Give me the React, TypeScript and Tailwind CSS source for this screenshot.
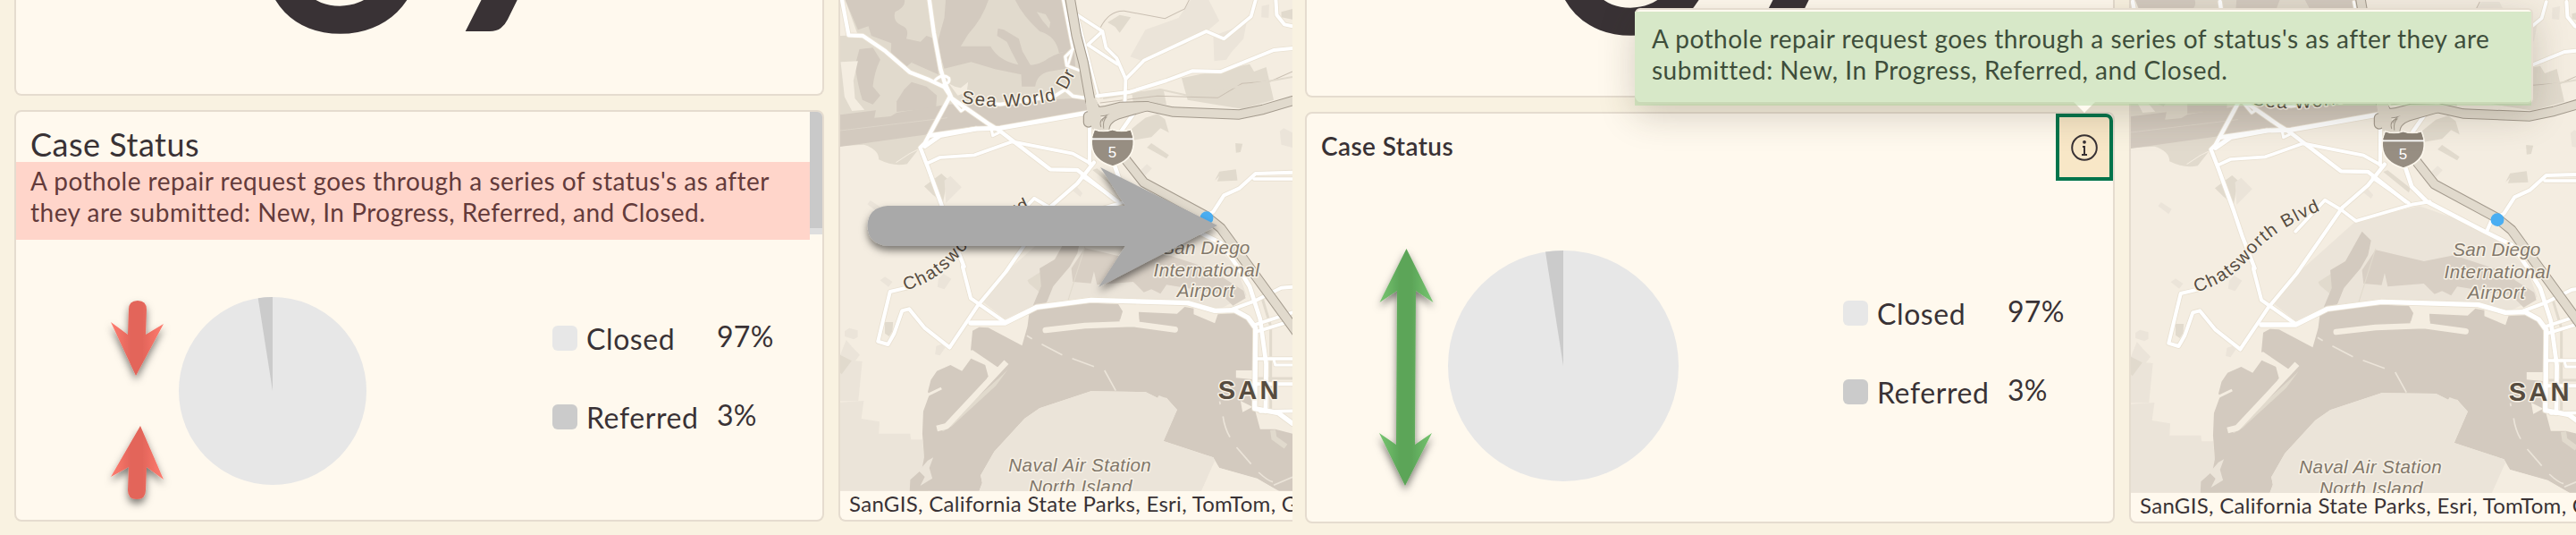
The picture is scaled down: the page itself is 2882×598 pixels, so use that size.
import { ReactNode } from 'react';

const DESCRIPTION_NARROW = ["A pothole repair request goes through a series of status's as after", 'they are submitted: New, In Progress, Referred, and Closed.'];
const DESCRIPTION_WIDE = ["A pothole repair request goes through a series of status's as after they are", 'submitted: New, In Progress, Referred, and Closed.'];

const LEGEND = [
  { label: 'Closed', value: '97%', color: 'bg-[#e7e7e7]' },
  { label: 'Referred', value: '3%', color: 'bg-[#cbcbcb]' }
];

// parks and blocks, light to dark
const PARKS = [
  '990,190 1040,100 1150,60 1190,0 1250,0 1285,70 1250,100 1170,150 1030,205',
  '1425,20 1450,15 1448,60 1424,58',
  '1265,120 1320,100 1375,75 1365,130 1325,175 1308,200 1268,205',
  '120,685 130,672 165,695 155,712',
  '800,640 815,628 832,648 825,660',
  '1025,570 1045,550 1062,565 1040,588',
  '775,735 985,685 1210,765 1340,894 1375,990 1270,1045 1200,1020 860,995 680,1020 575,1070 500,1010 560,930',
  '45,1110 60,1100 88,1108 88,1130 75,1138 45,1128',
  '30,1190 50,1140 68,1162 95,1190 80,1210 103,1212 90,1345 30,1345',
  '30,1349 108,1344 100,1404 160,1414 158,1454 262,1454 264,1474 302,1474 320,1646 30,1646',
  '355,935 372,918 398,935 375,970 352,962',
  '348,1160 365,1155 378,1165 360,1192 344,1188',
  '162,940 178,928 203,945 190,962',
  '1485,440 1498,430 1527,445 1527,495 1490,485'
];

const BLOCKS = [
  '915,75 955,50 992,58 955,110 940,90',
  '1160,262 1385,215 1400,240 1440,225 1465,335 1360,365 1180,335',
  '995,310 1100,300 1110,350 1000,345',
  '985,440 1040,395 1080,382 1105,400 1118,445 1090,430 1060,460 1000,470',
  '1045,495 1060,480 1118,520 1110,532',
  '1338,480 1362,482 1355,510 1340,512',
  '1270,605 1285,575 1340,568 1345,605 1278,608 1285,590',
  '308,625 365,582 385,600 370,680 335,652',
  '178,1080 205,1080 203,1110 192,1128 178,1118',
  '30,1190 68,1210 35,1255 30,1250',
  '865,570 880,565 955,625 950,640',
  '650,940 720,894 740,894 690,980 655,950',
  '1490,40 1527,30 1527,65 1490,58'
];

const BAY =
  '655,160 700,135 860,122 950,125 965,150 955,184 1020,184 1018,152 1145,158 1170,135 1200,140 1200,160 1270,190 1280,160 1340,155 1375,170 1395,210 1395,348 1340,348 1340,373 1395,378 1400,470 1420,545 1470,545 1527,560 1527,752 1480,752 1410,710 1285,675 1265,640 1100,585 1145,480 1110,440 1080,440 1040,420 860,418 690,475 640,510 540,620 495,700 500,725 490,752 260,752 262,715 300,680 308,640 302,560 305,485 325,430 320,420 330,380 350,350 395,330 433,350 463,308 510,330 522,375 556,338 540,338 462,280 468,215 490,203 520,205 632,265 650,200';

const ROADS = [
  { d: 'M36,0 L58,118 L105,120 L180,172 L260,242 L325,268 L375,292 L400,330 L520,415 L560,440 L725,568 L815,570 L940,670', w: 13 },
  { d: 'M325,0 L340,110 L362,230 L375,275 L395,320 L310,480 L295,495 L320,560 L370,700 L400,790 L440,894', w: 13 },
  { d: 'M310,490 L360,455 L480,432 L560,430 L700,405 L850,378', w: 15 },
  { d: 'M325,455 L480,432', w: 14 },
  { d: 'M318,548 L360,528 L475,520 L600,475 L800,515 L858,548', w: 11 },
  { d: 'M395,330 L430,372 L445,362', w: 9 },
  { d: 'M530,430 L535,455 L555,445', w: 9 },
  { d: 'M345,268 Q370,245 390,262 Q395,280 370,285', w: 9 },
  { d: 'M480,345 L560,350 L740,322 L775,300 L800,322 L850,330', w: 11 },
  { d: 'M800,165 L775,190 L780,220 L820,235', w: 9 },
  { d: 'M800,165 L785,215', w: 7 },
  { d: 'M768,0 L800,165', w: 8 },
  { d: 'M815,50 L898,105 L910,160 L945,195 L975,265 L972,350', w: 11 },
  { d: 'M898,105 L850,150 L948,215', w: 11 },
  { d: 'M815,50 L885,325', w: 7 },
  { d: 'M975,265 L1035,203 L1242,105 L1300,130 L1390,55 L1405,0', w: 11 },
  { d: 'M880,322 L990,308 L1110,270 L1195,238 L1290,240 L1465,168 L1527,162', w: 12 },
  { d: 'M1472,0 L1475,50 L1500,82 L1527,88', w: 12 },
  { d: 'M1005,375 L960,440', w: 13 },
  { d: 'M856,380 L855,548', w: 12 },
  { d: 'M392,1165 L310,1100 L258,1036 L235,1042 L208,1120 L188,1155 L155,1145 L195,978 L250,965', w: 12 },
  { d: 'M870,545 L815,615 L730,690', w: 13 },
  { d: 'M730,690 L578,912 L485,1025 L392,1165', w: 12 },
  { d: 'M575,770 L672,665 L730,700 L775,735 L960,680 L1020,670', w: 11 },
  { d: 'M940,560 L960,620 L1010,670 L1200,770 L1290,815 L1345,894 L1385,960 L1420,1070 L1440,1220 L1438,1380', w: 14 },
  { d: 'M830,590 L950,675', w: 11 },
  { d: 'M435,894 L462,1000 L575,1080', w: 12 },
  { d: 'M462,1083 L575,1083 L680,1030 L860,1006 L1180,1016 L1270,1042 L1335,1040 L1380,1065 L1405,1100 L1402,1370 L1480,1385 L1527,1420', w: 16 },
  { d: 'M1210,765 L1225,730 L1265,710 L1300,655 L1350,632 L1405,582 L1527,578', w: 12 },
  { d: 'M1400,600 L1527,600', w: 11 },
  { d: 'M1320,1040 L1400,1010 L1490,965 L1527,962', w: 12 },
  { d: 'M1400,1090 L1527,1048', w: 11 },
  { d: 'M1405,1113 L1527,1075', w: 11 },
  { d: 'M1402,1203 L1527,1203', w: 11 },
  { d: 'M1465,1205 L1470,1224 L1527,1224', w: 9 },
  { d: 'M1402,1288 L1527,1288', w: 12 },
  { d: 'M1420,1380 L1527,1378', w: 11 }
];

const FREEWAYS = [
  'M790,-10 L812,120 L835,210 L858,340 L880,375 L905,372 L960,358 L1045,356 L1130,375 L1350,384 L1430,367 L1527,338',
  'M905,435 Q905,395 960,380 L1045,356',
  'M975,535 L1035,612 L1240,724 L1290,765 L1400,918 L1545,1120'
];

function CaseMap() {
  return (
    <svg viewBox="30 -6 1497 1653" preserveAspectRatio="none" className="block h-[551px] w-[506px] shrink-0" fontFamily="'Liberation Sans', Arial, sans-serif">
      <defs>
        <path id="sea-world" d="M430,345 Q500,357 575,358 Q670,354 760,332" />
        <path id="chatsworth" d="M246,974 C330,950 385,905 432,850 C480,790 560,740 680,690" />
      </defs>
      <rect x="30" y="-6" width="1497" height="1653" fill="#f4ede1" />

      {/* mission bay */}
      <g transform="translate(29.6 0) scale(.986 1)">
        <path d="M15,-6 L765,-6 L800,200 L830,340 L830,380 L500,425 L290,460 L260,505 L225,550 Q180,560 130,535 Q130,500 80,485 L0,490 L0,120 L60,118 Z" fill="#e1dacd" />
        <g fill="#d3cabf">
          <path d="M15,-6 L215,-6 Q225,20 185,40 Q175,70 205,85 Q235,95 222,130 L270,140 L290,120 L318,130 L330,250 L240,210 L250,200 L210,235 L170,190 L172,145 L105,120 L95,88 L60,100 Z" />
          <path d="M355,-6 L500,-6 Q480,60 430,115 L405,155 Q470,155 505,155 Q530,200 590,215 Q660,228 700,195 Q735,175 785,165 L790,225 L700,240 Q660,250 655,290 L610,290 L608,250 L520,232 L440,208 L350,230 L325,150 L350,60 Z" />
          <path d="M530,95 L550,100 L600,130 L612,172 L640,220 L600,220 L575,172 L560,140 L527,120 Z" />
          <path d="M585,-6 L760,-6 L790,165 L735,178 Q725,120 670,105 Q610,50 585,-6 Z" />
          <path d="M65,165 L110,160 L135,200 Q115,240 110,290 L135,320 L110,350 L75,335 Q60,290 50,220 Z" />
          <path d="M215,300 L240,275 L290,290 L325,320 L322,362 L190,375 L190,340 Z" />
          <path d="M0,385 L120,370 L115,395 L170,390 L190,378 L360,350 L830,328 L830,376 L500,428 L300,450 L0,492 Z" />
        </g>
        <path d="M2,208 L60,205 L45,270 L50,330 L82,368 L40,372 L15,325 Z" fill="#f4ede1" />
        <path d="M0,-6 L12,-6 L28,110 L0,120 Z" fill="#f4ede1" />
        <path d="M365,280 L385,290 L405,295 L430,275 L425,310 L395,320 Z" fill="#f4ede1" />
        <path d="M660,40 L690,48 L706,75 L702,95 L680,70 Z" fill="#e1dacd" />
        <path d="M0,438 L360,395" stroke="#e1dacd" strokeWidth="2" />
      </g>

      {PARKS.map((points) => <polygon key={points} points={points} fill="#ebe4d9" />)}
      {BLOCKS.map((points) => <polygon key={points} points={points} fill="#e1dacd" />)}
      <polygon points="375,605 395,590 432,628 380,680" fill="#ebe4d9" />
      <path d="M795,770 L825,800 L815,850 L790,894 L735,960 L715,1010 L690,1050 L650,1100 L670,1020 L695,960 L690,900 L740,870 Z" fill="#d3cabf" />
      <path d="M840,832 L1000,870 L1100,850 L1250,900 L1365,975 L1372,1000 L1330,1025 L1290,985 L1110,955 L1090,985 L1060,970 L1035,980 L1000,945 L880,955 L870,910 L860,950 L800,945 L795,900 Z" fill="#d8cfc4" />
      <path d="M840,828 L785,1005" stroke="#e1dacd" strokeWidth="3" />

      {/* san diego bay */}
      <g transform="translate(0 894)">
        <polygon points={BAY} fill="#d3cabf" />
        <polygon points="860,418 1040,420 1080,440 1085,432 1110,442 1145,480 1100,585 1265,640 1270,655 1225,754 490,754 500,725 495,700 540,620 640,510 690,475" fill="#ebe4d9" />
        <polygon points="1268,655 1285,675 1410,712 1485,754 1225,754" fill="#f4ede1" />
        <polygon points="585,345 545,400 400,535 370,553 365,545 560,370" fill="#e1dacd" />
        <path d="M350,543 L382,535 L580,320" fill="none" stroke="#f4ede1" strokeWidth="20" strokeLinejoin="round" />
        <path d="M463,285 L550,345 L520,380" fill="none" stroke="#f4ede1" strokeWidth="14" />
        <path d="M320,430 L365,408" fill="none" stroke="#f4ede1" strokeWidth="9" />
        <path d="M710,213 L840,198 L1000,192 L1138,211" fill="none" stroke="#f4ede1" strokeWidth="20" strokeLinecap="round" strokeLinejoin="round" />
        <path d="M955,184 L1020,184" stroke="#f4ede1" strokeWidth="12" />
        <path d="M648,232 L665,242 M697,260 L765,296 M798,308 L870,335 M905,348 L942,416 M1286,452 L1288,462 M1297,502 Q1302,540 1320,572 M1342,606 L1390,662 M1415,690 Q1445,718 1462,722 M1465,733 L1527,706" fill="none" stroke="#ebe4d9" strokeWidth="5" />
        <path d="M290,685 L320,650 L338,640 L325,675 L335,710 L295,735 L310,705 Z" fill="#ebe4d9" />
        <path d="M1355,450 L1395,470 L1362,488 Z" fill="#f4ede1" />
        <path d="M1462,548 L1466,575 L1505,603" fill="none" stroke="#e1dacd" strokeWidth="18" />
        <path d="M1425,100 L1455,200 L1455,480 M1402,375 L1527,375" fill="none" stroke="#e1dacd" strokeWidth="9" />
      </g>

      <g fill="none" stroke="#c9bfb2" strokeWidth="3">
        <path d="M890,95 Q920,35 970,37 L1105,62 L1170,30 L1185,0" />
        <path d="M890,345 L1080,322 L1280,328 L1360,280 L1455,272 L1527,240" />
        <path d="M215,545 L260,515 L300,495" stroke="#f4ede1" />
      </g>
      <path d="M835,185 L895,330 M900,330 L1090,300 L1180,320 L1527,258" fill="none" stroke="#e1dacd" strokeWidth="6" />

      <g fill="none" strokeLinejoin="round" strokeLinecap="round">
        {ROADS.map(({ d, w }) => <path key={d} d={d} stroke="#e9e1d2" strokeWidth={w + 5} />)}
        {ROADS.map(({ d, w }) => <path key={d} d={d} stroke="#fff" strokeWidth={w} />)}
        <path d="M852,390 L852,410" stroke="#a39a8d" strokeWidth="36" />
        {FREEWAYS.map((d) => <path key={d} d={d} stroke="#a39a8d" strokeWidth="34" />)}
        <path d="M852,390 L852,410" stroke="#e1dacd" strokeWidth="29" />
        {FREEWAYS.map((d) => <path key={d} d={d} stroke="#e1dacd" strokeWidth="28" />)}
        <path d="M862,345 L880,420" stroke="#e1dacd" strokeWidth="38" />
        <path d="M893,425 Q885,398 912,392 Q898,405 902,430" stroke="#a39a8d" strokeWidth="3" />
      </g>

      {/* interstate shield */}
      <path d="M872,434 Q900,445 931,434 Q962,445 992,434 Q1003,462 1001,485 Q997,540 932,558 Q866,540 862,485 Q860,460 872,434 Z" fill="#978e82" stroke="#fdf8ee" strokeWidth="5" />
      <path d="M873,437 Q900,448 931,437 Q962,448 990,437 L998,461 L865,461 Z" fill="#8a8175" />
      <path d="M863,466 L1000,466" stroke="#fff" strokeWidth="5" />
      <text x="931" y="528" fontSize="50" fill="#fff" textAnchor="middle">5</text>

      <circle cx="1243" cy="731" r="22" fill="#4aaef2" />

      <g stroke="#f7f1e6" strokeWidth="9" strokeLinejoin="round" paintOrder="stroke" fill="#564c40" fontSize="60">
        <text><textPath href="#sea-world" textLength="317">Sea World</textPath></text>
        <text transform="translate(778 303) rotate(-62)" letterSpacing="2">Dr</text>
        <text><textPath href="#chatsworth" textLength="500">Chatsworth Blvd</textPath></text>
        <text x="1281" y="1339" fontSize="86" fontWeight="bold" textLength="200">SAN</text>
        <g fill="#81776a" fontSize="61" fontStyle="italic">
          <text x="1096" y="853" textLength="290">San Diego</text>
          <text x="1067" y="926" textLength="350">International</text>
          <text x="1145" y="997" textLength="190">Airport</text>
          <text x="587" y="1581" textLength="472">Naval Air Station</text>
          <text x="654" y="1652" textLength="342">North Island</text>
        </g>
      </g>
    </svg>
  );
}

function MapPanel({ className }: { className: string }) {
  return (
    <div className={`flex w-[600px] shrink-0 flex-col justify-end overflow-hidden rounded-bl-lg border-b-2 border-l-2 border-[#e5dccf] bg-[#fff9ee] ${className}`}>
      <CaseMap />
      <p className="h-8 shrink-0 whitespace-nowrap pl-[10px] text-[24px] leading-[27px] tracking-[0.3px]">
        SanGIS, California State Parks, Esri, TomTom, Garmin
      </p>
    </div>
  );
}

function Pie({ size }: { size: number }) {
  return (
    <svg width={size} height={size} viewBox="-100 -100 200 200" className="shrink-0">
      <circle r="100" fill="#e7e7e7" />
      <path d="M0,0 L-15.5,-98.8 A100,100 0 0 1 0,-100 Z" fill="#cbcbcb" />
    </svg>
  );
}

function Legend() {
  return (
    <ul className="flex flex-col gap-[44px]">
      {LEGEND.map((item) => (
        <li key={item.label} className="flex h-11 items-center text-[32px] leading-[44px]">
          <span className={`size-7 rounded-md ${item.color}`} />
          <span className="ml-[10px] w-[146px] pt-0.5 tracking-[0.6px]">{item.label}</span>
          <span className="-mt-1 tracking-[0.3px]">{item.value}</span>
        </li>
      ))}
    </ul>
  );
}

function CountCard({ className }: { className: string }) {
  return (
    <div className={`flex shrink-0 items-end justify-center overflow-hidden rounded-b-lg border-2 border-t-0 border-[#e5dccf] bg-[#fff9ee] pb-[64px] pl-[26px] ${className}`}>
      <span className="text-[350px] font-semibold leading-[282px]">67</span>
    </div>
  );
}

function Screen({ className, children }: { className: string; children: ReactNode }) {
  return <section className={`flex h-[598px] items-start gap-4 overflow-hidden bg-[#f9f2e1] ${className}`}>{children}</section>;
}

function Arrows() {
  return (
    <svg viewBox="0 0 2882 598" className="pointer-events-none absolute inset-0 h-[598px] w-[2882px]">
      <defs>
        <filter id="shadow" x="-40%" y="-40%" width="180%" height="180%">
          <feDropShadow dx="0" dy="5" stdDeviation="4" floodColor="#000" floodOpacity=".5" />
        </filter>
        <linearGradient id="red" x1="0" x2="1">
          <stop offset="0" stopColor="#ff7d70" />
          <stop offset=".38" stopColor="#e3655a" />
          <stop offset=".6" stopColor="#e3655a" />
          <stop offset="1" stopColor="#ff7d70" />
        </linearGradient>
        <linearGradient id="green" x1="0" x2="1">
          <stop offset="0" stopColor="#78c672" />
          <stop offset=".38" stopColor="#5ca558" />
          <stop offset=".6" stopColor="#5ca558" />
          <stop offset="1" stopColor="#78c672" />
        </linearGradient>
      </defs>
      <g filter="url(#shadow)">
        <path d="M144,346 Q144,336 154,336 Q164,336 164,346 L163,374 L183,362 L152,420 L124,360 L143,374 Z" fill="url(#red)" />
        <path d="M157,476 L183,536 L164,522 L163,548 Q163,558 153,558 Q143,558 143,548 L144,522 L124,533 Z" fill="url(#red)" />
      </g>
      <path d="M1573.5,278 L1603.5,338 L1584,325 L1583,497 L1602,484 L1572,543 L1543,484 L1562,497 L1563,325 L1543.5,338 Z" fill="url(#green)" filter="url(#shadow)" />
      <path d="M993,230 L1259,230 L1231,187 L1362,252 L1229,321 L1259,275 L993,275 Q971,273 970.5,252.5 Q971,232 993,230 Z" fill="#a9a9a9" filter="url(#shadow)" />
    </svg>
  );
}

export default function App() {
  return (
    <main className="relative flex h-[598px] w-[2882px] overflow-hidden font-['Lato',sans-serif] text-[#393235]">
      <Screen className="w-[1446px] pl-4">
        <div className="flex w-[906px] shrink-0 flex-col gap-4">
          <CountCard className="h-[107px]" />
          <div className="flex h-[460px] flex-col overflow-hidden rounded-lg border-2 border-[#e5dccf] bg-[#fff9ee]">
            <div className="flex">
              <div className="flex-1">
                <h2 className="h-14 whitespace-nowrap pl-4 pt-[14px] text-[36px] leading-[44px] tracking-[0.5px]">Case Status</h2>
                <div className="h-[87px] whitespace-nowrap bg-[#ffd5ca] pl-4 pt-1 text-[28px] leading-[35px] tracking-[0.5px] text-[#633b3b]">
                  {DESCRIPTION_NARROW.map((line) => <p key={line}>{line}</p>)}
                </div>
              </div>
              <div className="h-[137px] w-[14px] bg-[#dedede]">
                <div className="h-[130px] bg-[#c9c9c9]" />
              </div>
            </div>
            <div className="flex items-start pl-[182px] pt-[64px]">
              <Pie size={210} />
              <div className="ml-[208px] mt-[24px]">
                <Legend />
              </div>
            </div>
          </div>
        </div>
        <MapPanel className="h-[583px]" />
      </Screen>

      <Screen className="w-[1436px] pl-[14px]">
        <div className="flex w-[906px] shrink-0 flex-col gap-4">
          <CountCard className="h-[109px]" />
          <div className="flex h-[460px] flex-col overflow-hidden rounded-lg border-2 border-[#e5dccf] bg-[#fff9ee]">
            <div className="flex h-[75px] items-center justify-between">
              <h2 className="pb-[3px] pl-4 text-[28px] font-semibold tracking-[0.4px]">Case Status</h2>
              <button type="button" className="flex h-[75px] w-16 items-center justify-center rounded-tr-lg border-4 border-[#00744b] bg-[#f8e7c7]">
                <svg width="30" height="30" viewBox="0 0 30 30" fill="none" stroke="#393235" strokeWidth="2">
                  <circle cx="15" cy="15" r="13.8" />
                  <circle cx="15" cy="8.8" r="1.2" fill="#393235" strokeWidth="1.4" />
                  <path d="M13,14 H15 V23 M12,23 H18" />
                </svg>
              </button>
            </div>
            <div className="flex items-start pl-[158px] pt-[78px]">
              <Pie size={258} />
              <div className="ml-[184px] mt-[48px]">
                <Legend />
              </div>
            </div>
          </div>
        </div>
        <MapPanel className="h-[585px]" />
      </Screen>

      <div className="absolute left-[1829px] top-[9px] h-[107px] w-[1005px] rounded-md border-2 border-[#e5dccf] bg-[#fffaf0] shadow-[0_12px_40px_rgba(60,50,30,0.22)]" />
      <svg width="28" height="14" viewBox="0 0 28 14" className="absolute left-[2318px] top-[113px]">
        <path d="M1,0 L14,13 L27,0 Z" fill="#fffaf0" />
      </svg>
      <div className="absolute left-[1829px] top-[13px] h-[105px] w-[1003px] bg-[#a9d49a]/45">
        <div className="h-[100px] whitespace-nowrap rounded-b-md bg-[#d7e8c8] pl-[19px] pt-[13px] text-[28px] leading-[35px] tracking-[0.5px] text-[#3e4e3b]">
          {DESCRIPTION_WIDE.map((line) => <p key={line}>{line}</p>)}
        </div>
      </div>

      <Arrows />
    </main>
  );
}
